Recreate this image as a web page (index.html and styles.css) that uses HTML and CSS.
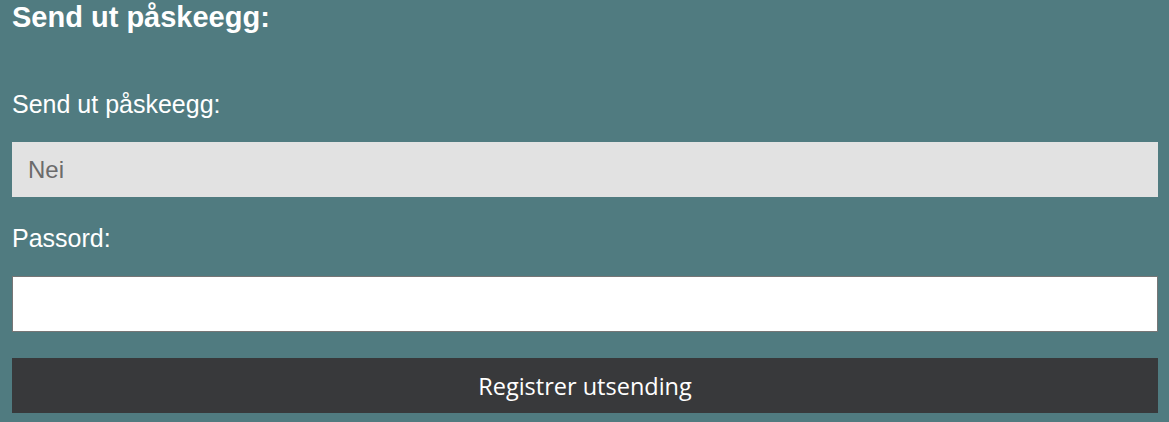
FILE: index.html
```html
<!DOCTYPE html>
<html lang="no">
<head>
<meta charset="utf-8">
<title>Send ut påskeegg</title>
<link rel="stylesheet" href="styles.css">
</head>
<body>
<main class="page">
  <h2 class="title">Send ut påskeegg:</h2>
  <form class="form">
    <label class="label" for="send">Send ut påskeegg:</label>
    <div class="select" id="send">Nei</div>
    <label class="label" for="pw">Passord:</label>
    <input class="input" id="pw" type="password">
    <button class="button" type="button">Registrer utsending</button>
  </form>
</main>
</body>
</html>
```
FILE: styles.css
```css
html, body {
  margin: 0;
  padding: 0;
  background: #507b80;
}
body {
  font-family: "Liberation Sans", Arial, sans-serif;
  color: #ffffff;
}
.page {
  padding: 1px 11px 0 12px;
}
.title {
  margin: 0;
  font-size: 29px;
  font-weight: bold;
  line-height: 33px;
}
.form {
  display: block;
  margin: 56px 0 0 0;
}
.label {
  display: block;
  font-size: 25px;
  line-height: 28px;
  margin-bottom: 24px;
}
.select {
  box-sizing: border-box;
  height: 55px;
  background: #e2e2e2;
  color: #6b6b6b;
  font-size: 24px;
  padding-left: 16px;
  display: flex;
  align-items: center;
  margin-bottom: 27px;
}
.input {
  display: block;
  box-sizing: border-box;
  height: 56px;
  width: 100%;
  margin: 0 0 26px 0;
  border: 1px solid #767676;
  background: #ffffff;
  padding: 0;
}
.button {
  display: block;
  box-sizing: border-box;
  height: 55px;
  width: 100%;
  border: none;
  background: #38393b;
  color: #ffffff;
  font-family: "Open Sans", "Noto Sans", sans-serif;
  font-size: 23.5px;
  padding: 0;
}
```
